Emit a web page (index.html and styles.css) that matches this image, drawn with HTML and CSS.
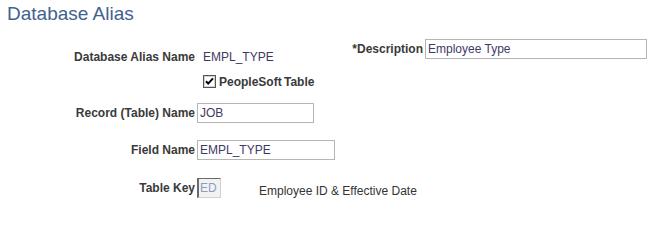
FILE: index.html
```html
<!DOCTYPE html>
<html>
<head>
<meta charset="utf-8">
<link rel="stylesheet" href="styles.css">
</head>
<body>
<h1 class="title">Database Alias</h1>
<div class="form">
  <div class="label c1 r1">Database Alias Name</div>
  <div class="value r1">EMPL_TYPE</div>
  <div class="label desc-label r1">*Description</div>
  <div class="r1 desc-cell"><div class="input w-desc">Employee Type</div></div>

  <div class="check-cell r2">
    <span class="checkbox"><svg width="13" height="13" viewBox="0 0 13 13"><rect x="0.5" y="0.5" width="12" height="12" fill="#fff" stroke="#555"/><rect x="1.5" y="1.5" width="10" height="10" fill="none" stroke="#d4d4d4"/><path d="M3 6.2 L5.2 8.6 L10 3.4" fill="none" stroke="#000" stroke-width="2"/></svg></span>
    <span class="check-label">PeopleSoft Table</span>
  </div>

  <div class="label c1 r3">Record (Table) Name</div>
  <div class="field r3"><div class="input w-rec">JOB</div></div>

  <div class="label c1 r4">Field Name</div>
  <div class="field r4"><div class="input w-field">EMPL_TYPE</div></div>

  <div class="label c1 r5">Table Key</div>
  <div class="r5 key-cell">
    <div class="input key">ED</div>
    <span class="key-desc">Employee ID &amp; Effective Date</span>
  </div>
</div>
</body>
</html>
```

FILE: styles.css
```css
html, body {
  margin: 0;
  padding: 0;
  background: #fff;
}
body {
  font-family: "Liberation Sans", Arial, sans-serif;
  font-size: 12px;
  color: #333;
}
.title {
  margin: 0;
  padding: 3px 0 0 7px;
  font-size: 19px;
  line-height: 22px;
  font-weight: normal;
  color: #41618f;
}
.form {
  display: grid;
  margin: 22px 0 0 7px;
  grid-template-columns: 188px 150px 74px 222px;
  grid-template-rows: 25px 31px 37px 38px 20px;
  column-gap: 2px;
  align-items: start;
}
.label {
  font-weight: bold;
  text-align: right;
  line-height: 20px;
  height: 20px;
  color: #3a3a3a;
  white-space: nowrap;
}
.c1 { grid-column: 1; }
.value {
  grid-column: 2;
  line-height: 20px;
  padding-left: 6px;
  color: #3e3a5e;
}
.r1 { grid-row: 1; }
.r2 { grid-row: 2; }
.r3 { grid-row: 3; }
.r4 { grid-row: 4; }
.r5 { grid-row: 5; }
.desc-label { grid-column: 3; margin-top: -8px; }
.desc-cell { grid-column: 4; margin-top: -8px; }
.check-cell {
  grid-column: 2 / span 2;
  display: flex;
  align-items: center;
  height: 20px;
  padding-left: 6px;
}
.checkbox { display: block; height: 13px; margin-top: -2px; }
.checkbox svg { display: block; }
.check-label {
  font-weight: bold;
  margin-left: 3px;
  color: #3a3a3a;
  word-spacing: -1px;
}
.field { grid-column: 2 / span 2; }
.input {
  box-sizing: border-box;
  height: 20px;
  border: 1px solid #b5b5b5;
  background: #fff;
  padding: 0 2px;
  line-height: 18px;
  color: #3e3a66;
  white-space: nowrap;
  overflow: hidden;
}
.w-desc { width: 222px; }
.w-rec { width: 117px; }
.w-field { width: 138px; }
.key-cell {
  grid-column: 2 / span 3;
  display: flex;
  align-items: flex-end;
}
.input.key {
  width: 24px;
  background: #f2f2f2;
  border-top: 1px solid #6a6a6a;
  border-left: 2px solid #6a6a6a;
  border-right: 1px solid #d0d0d0;
  border-bottom: 1px solid #d0d0d0;
  padding-left: 1px;
  color: #8a9cc0;
}
.key-desc {
  margin-left: 38px;
  line-height: 14px;
  color: #333;
}
```
